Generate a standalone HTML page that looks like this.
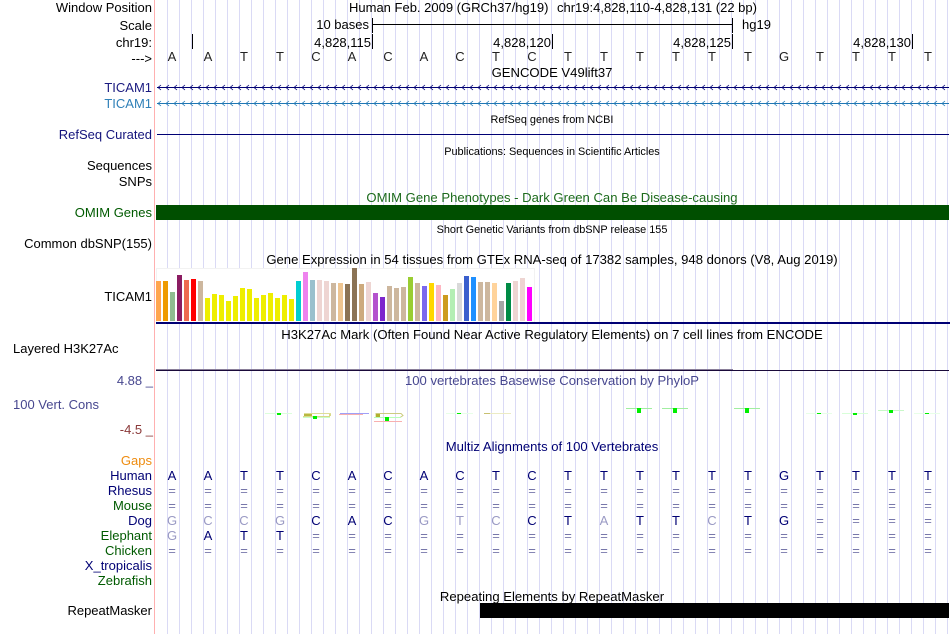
<!DOCTYPE html>
<html><head><meta charset="utf-8"><style>
html,body{margin:0;padding:0;background:#fff;width:950px;height:634px;overflow:hidden}
svg{display:block;position:absolute;left:0;top:0}
text{font-family:"Liberation Sans",sans-serif;font-size:13px}
.e{text-anchor:end}.m{text-anchor:middle;font-size:13.1px}
text.s{font-size:10.9px;text-anchor:middle}
.n{fill:#000074}.g{fill:#9a9ac4}.q{fill:#7777aa}
</style></head><body>
<svg width="950" height="634" viewBox="0 0 950 634" xmlns="http://www.w3.org/2000/svg">
<defs>
<pattern id="grid" x="167" y="0" width="12" height="634" patternUnits="userSpaceOnUse"><rect x="0" y="0" width="1" height="634" fill="#dadaf5"/></pattern>
<pattern id="chev1" x="157" y="82" width="8" height="11" patternUnits="userSpaceOnUse"><path d="M4 3L1 5.500L4 8" fill="none" stroke="#000074" stroke-width="0.800"/></pattern>
<pattern id="chev2" x="157" y="98" width="8" height="11" patternUnits="userSpaceOnUse"><path d="M4 3L1 5.500L4 8" fill="none" stroke="#1f77b4" stroke-width="0.800"/></pattern>
</defs>
<rect width="950" height="634" fill="#fff"/>
<rect x="156" y="0" width="794" height="634" fill="url(#grid)"/>
<rect x="154" y="0" width="1" height="634" fill="#ffb0b0"/>

<!-- left labels -->
<text x="152" y="12" class="e">Window Position</text>
<text x="152" y="30" class="e">Scale</text>
<text x="152" y="47" class="e">chr19:</text>
<text x="152" y="63" class="e">---&gt;</text>
<text x="152" y="92" class="e" fill="#1a1a80">TICAM1</text>
<text x="152" y="108" class="e" fill="#2f80b8">TICAM1</text>
<text x="152" y="139" class="e" fill="#14147c">RefSeq Curated</text>
<text x="152" y="170" class="e">Sequences</text>
<text x="152" y="186" class="e">SNPs</text>
<text x="152" y="217" class="e" fill="#005a00">OMIM Genes</text>
<text x="152" y="248" class="e">Common dbSNP(155)</text>
<text x="152" y="301" class="e">TICAM1</text>
<text x="13" y="353">Layered H3K27Ac</text>
<text x="153" y="385" class="e" fill="#47478f">4.88 _</text>
<text x="13" y="409" fill="#47478f">100 Vert. Cons</text>
<text x="153" y="434" class="e" fill="#8b3a3a">-4.5 _</text>
<text x="152" y="465" class="e" fill="#ee8c10">Gaps</text>
<text x="152" y="480" class="e n">Human</text>
<text x="152" y="495" class="e n">Rhesus</text>
<text x="152" y="510" class="e" fill="#005a00">Mouse</text>
<text x="152" y="525" class="e n">Dog</text>
<text x="152" y="540" class="e" fill="#005a00">Elephant</text>
<text x="152" y="555" class="e" fill="#005a00">Chicken</text>
<text x="152" y="570" class="e n">X_tropicalis</text>
<text x="152" y="585" class="e" fill="#005a00">Zebrafish</text>
<text x="152" y="615" class="e">RepeatMasker</text>

<!-- header -->
<text x="349" y="12">Human Feb. 2009 (GRCh37/hg19)</text>
<text x="557" y="12">chr19:4,828,110-4,828,131 (22 bp)</text>
<text x="369" y="29" class="e">10 bases</text>
<rect x="372" y="18" width="1" height="15" fill="#000"/>
<rect x="372" y="24" width="361" height="1" fill="#000"/>
<rect x="732" y="18" width="1" height="15" fill="#000"/>
<text x="742" y="29">hg19</text>
<rect x="192" y="34" width="1" height="15" fill="#000"/>
<text x="371" y="47" class="e">4,828,115</text><rect x="372" y="34" width="1" height="15" fill="#000"/>
<text x="551" y="47" class="e">4,828,120</text><rect x="552" y="34" width="1" height="15" fill="#000"/>
<text x="731" y="47" class="e">4,828,125</text><rect x="732" y="34" width="1" height="15" fill="#000"/>
<text x="911" y="47" class="e">4,828,130</text><rect x="912" y="34" width="1" height="15" fill="#000"/>
<g fill="#222" text-anchor="middle">
<text x="172" y="61" text-anchor="middle">A</text><text x="208" y="61" text-anchor="middle">A</text><text x="244" y="61" text-anchor="middle">T</text><text x="280" y="61" text-anchor="middle">T</text><text x="316" y="61" text-anchor="middle">C</text><text x="352" y="61" text-anchor="middle">A</text><text x="388" y="61" text-anchor="middle">C</text><text x="424" y="61" text-anchor="middle">A</text><text x="460" y="61" text-anchor="middle">C</text><text x="496" y="61" text-anchor="middle">T</text><text x="532" y="61" text-anchor="middle">C</text><text x="568" y="61" text-anchor="middle">T</text><text x="604" y="61" text-anchor="middle">T</text><text x="640" y="61" text-anchor="middle">T</text><text x="676" y="61" text-anchor="middle">T</text><text x="712" y="61" text-anchor="middle">T</text><text x="748" y="61" text-anchor="middle">T</text><text x="784" y="61" text-anchor="middle">G</text><text x="820" y="61" text-anchor="middle">T</text><text x="856" y="61" text-anchor="middle">T</text><text x="892" y="61" text-anchor="middle">T</text><text x="928" y="61" text-anchor="middle">T</text>
</g>
<text x="552" y="77" class="m">GENCODE V49lift37</text>

<!-- gene lines -->
<rect x="157" y="87" width="792" height="1" fill="#000074"/>
<rect x="157" y="82" width="792" height="11" fill="url(#chev1)"/>
<rect x="157" y="103" width="792" height="1" fill="#1f77b4"/>
<rect x="157" y="98" width="792" height="11" fill="url(#chev2)"/>
<text x="552" y="123" class="s">RefSeq genes from NCBI</text>
<rect x="157" y="134" width="792" height="1" fill="#000074"/>
<text x="552" y="155" class="s">Publications: Sequences in Scientific Articles</text>
<text x="552" y="202" class="m" fill="#1d6b1d">OMIM Gene Phenotypes - Dark Green Can Be Disease-causing</text>
<rect x="156" y="205" width="793" height="15" fill="#004f00"/>
<text x="552" y="233" class="s">Short Genetic Variants from dbSNP release 155</text>
<text x="552" y="264" class="m">Gene Expression in 54 tissues from GTEx RNA-seq of 17382 samples, 948 donors (V8, Aug 2019)</text>

<!-- GTEx -->
<rect x="156" y="268" width="378" height="54" fill="#fff"/>
<rect x="156.500" y="268.500" width="378" height="54" fill="none" stroke="#f2f2f2"/>
<g>
<rect x="156" y="281" width="5" height="40" fill="#FFA54F"/><rect x="163" y="281" width="5" height="40" fill="#EE9A00"/><rect x="170" y="292" width="5" height="29" fill="#8FBC8F"/><rect x="177" y="275" width="5" height="46" fill="#8B1C62"/><rect x="184" y="280" width="5" height="41" fill="#EE6A50"/><rect x="191" y="279" width="5" height="42" fill="#FF0000"/><rect x="198" y="281" width="5" height="40" fill="#CDB79E"/>
<rect x="205" y="298" width="5" height="23" fill="#EEEE00"/><rect x="212" y="294" width="5" height="27" fill="#EEEE00"/><rect x="219" y="295" width="5" height="26" fill="#EEEE00"/><rect x="226" y="301" width="5" height="20" fill="#EEEE00"/><rect x="233" y="296" width="5" height="25" fill="#EEEE00"/><rect x="240" y="288" width="5" height="33" fill="#EEEE00"/><rect x="247" y="289" width="5" height="32" fill="#EEEE00"/><rect x="254" y="298" width="5" height="23" fill="#EEEE00"/><rect x="261" y="295" width="5" height="26" fill="#EEEE00"/><rect x="268" y="293" width="5" height="28" fill="#EEEE00"/><rect x="275" y="298" width="5" height="23" fill="#EEEE00"/><rect x="282" y="295" width="5" height="26" fill="#EEEE00"/><rect x="289" y="299" width="5" height="22" fill="#EEEE00"/>
<rect x="296" y="281" width="5" height="40" fill="#00CED1"/><rect x="303" y="272" width="5" height="49" fill="#EE82EE"/><rect x="310" y="280" width="5" height="41" fill="#9AC0CD"/><rect x="317" y="280" width="5" height="41" fill="#EED5D2"/><rect x="324" y="281" width="5" height="40" fill="#EED5D2"/><rect x="331" y="283" width="5" height="38" fill="#CDB79E"/><rect x="338" y="283" width="5" height="38" fill="#EEC591"/><rect x="345" y="284" width="5" height="37" fill="#8B7355"/><rect x="352" y="268" width="5" height="53" fill="#8B7355"/><rect x="359" y="284" width="5" height="37" fill="#CDAA7D"/><rect x="366" y="282" width="5" height="39" fill="#EED5D2"/><rect x="373" y="293" width="5" height="28" fill="#B452CD"/><rect x="380" y="297" width="5" height="24" fill="#7D26CD"/><rect x="387" y="286" width="5" height="35" fill="#CDB79E"/><rect x="394" y="288" width="5" height="33" fill="#CDB79E"/><rect x="401" y="287" width="5" height="34" fill="#CDB79E"/><rect x="408" y="277" width="5" height="44" fill="#9ACD32"/><rect x="415" y="283" width="5" height="38" fill="#CDB79E"/><rect x="422" y="286" width="5" height="35" fill="#7B68EE"/><rect x="429" y="283" width="5" height="38" fill="#FFD700"/><rect x="436" y="285" width="5" height="36" fill="#FFB6C1"/><rect x="443" y="295" width="5" height="26" fill="#CD9B1D"/><rect x="450" y="289" width="5" height="32" fill="#B4EEB4"/><rect x="457" y="283" width="5" height="38" fill="#D9D9D9"/><rect x="464" y="276" width="5" height="45" fill="#3A5FCD"/><rect x="471" y="277" width="5" height="44" fill="#1E90FF"/><rect x="478" y="282" width="5" height="39" fill="#CDB79E"/><rect x="485" y="282" width="5" height="39" fill="#CDB79E"/><rect x="492" y="283" width="5" height="38" fill="#FFD39B"/><rect x="499" y="301" width="5" height="20" fill="#A6A6A6"/><rect x="506" y="283" width="5" height="38" fill="#008B45"/><rect x="513" y="281" width="5" height="40" fill="#EED5D2"/><rect x="520" y="278" width="5" height="43" fill="#EED5D2"/><rect x="527" y="287" width="5" height="34" fill="#FF00FF"/>
</g>
<rect x="156" y="322" width="794" height="2" fill="#000074"/>
<text x="552" y="339" class="m">H3K27Ac Mark (Often Found Near Active Regulatory Elements) on 7 cell lines from ENCODE</text>
<rect x="156" y="369" width="577" height="1" fill="#8a7f99"/>
<rect x="156" y="370" width="793" height="1" fill="#1a0a3a"/>
<text x="552" y="385" class="m" fill="#47478f">100 vertebrates Basewise Conservation by PhyloP</text>

<!-- phyloP -->
<g>
<rect x="265" y="413" width="27" height="1" fill="#dcffdc"/><rect x="277" y="413" width="4" height="2" fill="#00ee00"/>
<rect x="304" y="413" width="27" height="1" fill="#dede98"/><rect x="303" y="416" width="27" height="1" fill="#d8d88a"/><rect x="304" y="414" width="8" height="2" fill="#b8b840"/><rect x="329" y="414" width="2" height="2" fill="#d8d88a"/><rect x="303" y="417" width="27" height="1" fill="#c8ffc8"/><rect x="313" y="416" width="4" height="3" fill="#00ee00"/>
<rect x="340" y="413" width="29" height="1" fill="#a0a0f8"/><rect x="339" y="414" width="24" height="1" fill="#f8b0b0"/>
<path d="M376 413.500h25l2 2-3 2h-24z" fill="none" stroke="#cccc80" stroke-width="1"/><rect x="376" y="414" width="4" height="3" fill="#b0b030"/><rect x="374" y="417" width="27" height="1" fill="#b8ffb8"/><rect x="385" y="417" width="4" height="4" fill="#00ee00"/><rect x="374" y="421" width="28" height="1" fill="#f8b0b0"/>
<rect x="446" y="413" width="27" height="1" fill="#e8ffe8"/><rect x="457" y="413" width="4" height="1" fill="#00ee00"/>
<rect x="484" y="413" width="27" height="1" fill="#ecebc4"/><rect x="484" y="413" width="6" height="1" fill="#c8c070"/>
<rect x="626" y="408" width="26" height="1" fill="#a0eea0"/><rect x="637" y="408" width="4" height="5" fill="#00ee00"/>
<rect x="662" y="408" width="26" height="1" fill="#a0eea0"/><rect x="673" y="408" width="4" height="5" fill="#00ee00"/>
<rect x="734" y="408" width="26" height="1" fill="#a0eea0"/><rect x="745" y="408" width="4" height="5" fill="#00ee00"/>
<rect x="806" y="413" width="26" height="1" fill="#e8ffe8"/><rect x="817" y="413" width="4" height="1" fill="#00ee00"/>
<rect x="842" y="413" width="26" height="1" fill="#d8ffd8"/><rect x="853" y="413" width="4" height="2" fill="#00ee00"/>
<rect x="878" y="410" width="26" height="1" fill="#c8f8c8"/><rect x="889" y="410" width="4" height="3" fill="#00ee00"/>
<rect x="914" y="413" width="26" height="1" fill="#e8ffe8"/><rect x="925" y="413" width="4" height="1" fill="#00ee00"/>
</g>

<text x="552" y="451" class="m n">Multiz Alignments of 100 Vertebrates</text>

<!-- alignment -->
<g class="n" text-anchor="middle">
<text x="172" y="480" text-anchor="middle">A</text><text x="208" y="480" text-anchor="middle">A</text><text x="244" y="480" text-anchor="middle">T</text><text x="280" y="480" text-anchor="middle">T</text><text x="316" y="480" text-anchor="middle">C</text><text x="352" y="480" text-anchor="middle">A</text><text x="388" y="480" text-anchor="middle">C</text><text x="424" y="480" text-anchor="middle">A</text><text x="460" y="480" text-anchor="middle">C</text><text x="496" y="480" text-anchor="middle">T</text><text x="532" y="480" text-anchor="middle">C</text><text x="568" y="480" text-anchor="middle">T</text><text x="604" y="480" text-anchor="middle">T</text><text x="640" y="480" text-anchor="middle">T</text><text x="676" y="480" text-anchor="middle">T</text><text x="712" y="480" text-anchor="middle">T</text><text x="748" y="480" text-anchor="middle">T</text><text x="784" y="480" text-anchor="middle">G</text><text x="820" y="480" text-anchor="middle">T</text><text x="856" y="480" text-anchor="middle">T</text><text x="892" y="480" text-anchor="middle">T</text><text x="928" y="480" text-anchor="middle">T</text>
</g>
<g class="q" text-anchor="middle">
<text x="172" y="495" text-anchor="middle">=</text><text x="208" y="495" text-anchor="middle">=</text><text x="244" y="495" text-anchor="middle">=</text><text x="280" y="495" text-anchor="middle">=</text><text x="316" y="495" text-anchor="middle">=</text><text x="352" y="495" text-anchor="middle">=</text><text x="388" y="495" text-anchor="middle">=</text><text x="424" y="495" text-anchor="middle">=</text><text x="460" y="495" text-anchor="middle">=</text><text x="496" y="495" text-anchor="middle">=</text><text x="532" y="495" text-anchor="middle">=</text><text x="568" y="495" text-anchor="middle">=</text><text x="604" y="495" text-anchor="middle">=</text><text x="640" y="495" text-anchor="middle">=</text><text x="676" y="495" text-anchor="middle">=</text><text x="712" y="495" text-anchor="middle">=</text><text x="748" y="495" text-anchor="middle">=</text><text x="784" y="495" text-anchor="middle">=</text><text x="820" y="495" text-anchor="middle">=</text><text x="856" y="495" text-anchor="middle">=</text><text x="892" y="495" text-anchor="middle">=</text><text x="928" y="495" text-anchor="middle">=</text>
<text x="172" y="510" text-anchor="middle">=</text><text x="208" y="510" text-anchor="middle">=</text><text x="244" y="510" text-anchor="middle">=</text><text x="280" y="510" text-anchor="middle">=</text><text x="316" y="510" text-anchor="middle">=</text><text x="352" y="510" text-anchor="middle">=</text><text x="388" y="510" text-anchor="middle">=</text><text x="424" y="510" text-anchor="middle">=</text><text x="460" y="510" text-anchor="middle">=</text><text x="496" y="510" text-anchor="middle">=</text><text x="532" y="510" text-anchor="middle">=</text><text x="568" y="510" text-anchor="middle">=</text><text x="604" y="510" text-anchor="middle">=</text><text x="640" y="510" text-anchor="middle">=</text><text x="676" y="510" text-anchor="middle">=</text><text x="712" y="510" text-anchor="middle">=</text><text x="748" y="510" text-anchor="middle">=</text><text x="784" y="510" text-anchor="middle">=</text><text x="820" y="510" text-anchor="middle">=</text><text x="856" y="510" text-anchor="middle">=</text><text x="892" y="510" text-anchor="middle">=</text><text x="928" y="510" text-anchor="middle">=</text>
<text x="820" y="525" text-anchor="middle">=</text><text x="856" y="525" text-anchor="middle">=</text><text x="892" y="525" text-anchor="middle">=</text><text x="928" y="525" text-anchor="middle">=</text>
<text x="316" y="540" text-anchor="middle">=</text><text x="352" y="540" text-anchor="middle">=</text><text x="388" y="540" text-anchor="middle">=</text><text x="424" y="540" text-anchor="middle">=</text><text x="460" y="540" text-anchor="middle">=</text><text x="496" y="540" text-anchor="middle">=</text><text x="532" y="540" text-anchor="middle">=</text><text x="568" y="540" text-anchor="middle">=</text><text x="604" y="540" text-anchor="middle">=</text><text x="640" y="540" text-anchor="middle">=</text><text x="676" y="540" text-anchor="middle">=</text><text x="712" y="540" text-anchor="middle">=</text><text x="748" y="540" text-anchor="middle">=</text><text x="784" y="540" text-anchor="middle">=</text><text x="820" y="540" text-anchor="middle">=</text><text x="856" y="540" text-anchor="middle">=</text><text x="892" y="540" text-anchor="middle">=</text><text x="928" y="540" text-anchor="middle">=</text>
<text x="172" y="555" text-anchor="middle">=</text><text x="208" y="555" text-anchor="middle">=</text><text x="244" y="555" text-anchor="middle">=</text><text x="280" y="555" text-anchor="middle">=</text><text x="316" y="555" text-anchor="middle">=</text><text x="352" y="555" text-anchor="middle">=</text><text x="388" y="555" text-anchor="middle">=</text><text x="424" y="555" text-anchor="middle">=</text><text x="460" y="555" text-anchor="middle">=</text><text x="496" y="555" text-anchor="middle">=</text><text x="532" y="555" text-anchor="middle">=</text><text x="568" y="555" text-anchor="middle">=</text><text x="604" y="555" text-anchor="middle">=</text><text x="640" y="555" text-anchor="middle">=</text><text x="676" y="555" text-anchor="middle">=</text><text x="712" y="555" text-anchor="middle">=</text><text x="748" y="555" text-anchor="middle">=</text><text x="784" y="555" text-anchor="middle">=</text><text x="820" y="555" text-anchor="middle">=</text><text x="856" y="555" text-anchor="middle">=</text><text x="892" y="555" text-anchor="middle">=</text><text x="928" y="555" text-anchor="middle">=</text>
</g>
<!-- Dog -->
<g text-anchor="middle">
<text x="172" y="525" text-anchor="middle" class="g">G</text><text x="208" y="525" text-anchor="middle" class="g">C</text><text x="244" y="525" text-anchor="middle" class="g">C</text><text x="280" y="525" text-anchor="middle" class="g">G</text><text x="316" y="525" text-anchor="middle" class="n">C</text><text x="352" y="525" text-anchor="middle" class="n">A</text><text x="388" y="525" text-anchor="middle" class="n">C</text><text x="424" y="525" text-anchor="middle" class="g">G</text><text x="460" y="525" text-anchor="middle" class="g">T</text><text x="496" y="525" text-anchor="middle" class="g">C</text><text x="532" y="525" text-anchor="middle" class="n">C</text><text x="568" y="525" text-anchor="middle" class="n">T</text><text x="604" y="525" text-anchor="middle" class="g">A</text><text x="640" y="525" text-anchor="middle" class="n">T</text><text x="676" y="525" text-anchor="middle" class="n">T</text><text x="712" y="525" text-anchor="middle" class="g">C</text><text x="748" y="525" text-anchor="middle" class="n">T</text><text x="784" y="525" text-anchor="middle" class="n">G</text>
<text x="172" y="540" text-anchor="middle" class="g">G</text><text x="208" y="540" text-anchor="middle" class="n">A</text><text x="244" y="540" text-anchor="middle" class="n">T</text><text x="280" y="540" text-anchor="middle" class="n">T</text>
</g>

<text x="552" y="601" class="m">Repeating Elements by RepeatMasker</text>
<rect x="480" y="603" width="469" height="15" fill="#000"/>
</svg>
</body></html>
